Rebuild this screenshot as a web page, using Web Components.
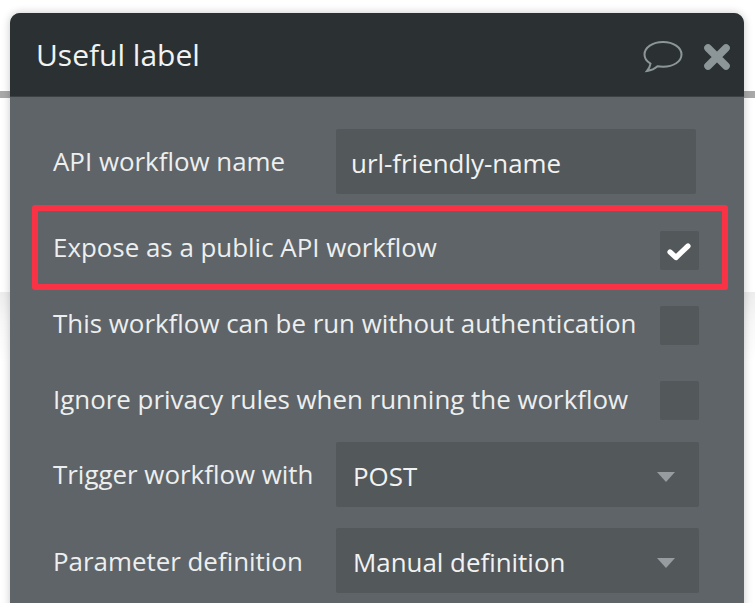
<!DOCTYPE html>
<html><head><meta charset="utf-8">
<style>
html,body{margin:0;padding:0;background:#fff;height:603px;width:755px;overflow:hidden}
</style></head><body>
<template id="t-stage"><style>
:host{display:block;position:relative;width:755px;height:603px;overflow:hidden;background:#fff;font-family:"Open Sans",sans-serif}
.line{position:absolute;left:0;right:0;top:91px;height:7px;background:#a9a9a9}
.band{position:absolute;left:0;right:0;top:292px;height:311px;background:linear-gradient(#ededed,#f8f8f8 30px,#fff 70px)}
.wrap{position:relative;padding:13px 11px 0 10px}
</style><div class="line"></div><div class="band"></div><div class="wrap"><slot></slot></div></template>

<template id="t-panel"><style>
:host{display:block;height:640px;border-radius:10px 10px 0 0;background:#5f6468;box-shadow:0 0 8px rgba(0,0,0,.22);overflow:hidden;position:relative}
header{height:83px;background:#2b3133;border-bottom:1px solid #3c4244;display:flex;align-items:center;padding:0 13px 0 26px;color:#f1f3f3;font-size:30px;gap:14px}
.t{flex:1;margin-top:0}
.b{padding:32px 48px 0 43px;display:flex;flex-direction:column}
</style><header><span class="t"><slot name="title"></slot></span><slot name="icons"></slot></header><div class="b"><slot></slot></div></template>

<template id="t-row"><style>
:host{display:flex;align-items:center;color:#edefef;font-size:25.9px;white-space:nowrap;justify-content:space-between}
.l{flex:none;display:block;margin-top:var(--nudge,-4px)}
</style><span class="l"><slot name="label"></slot></span><slot></slot></template>

<template id="t-input"><style>
:host{display:flex;align-items:center;box-sizing:border-box;width:360px;height:65px;background:#53585b;border-radius:2px;padding:2px 0 0 15px;color:#f1f3f3;font-size:25.9px}
</style><slot></slot></template>

<template id="t-select"><style>
:host{display:flex;align-items:center;justify-content:space-between;box-sizing:border-box;width:363px;height:65px;background:#53585b;border-radius:2px;padding:2px 24px 0 17px;color:#f1f3f3;font-size:25.9px;margin-right:-3px}
i{display:block;width:0;height:0;margin-top:3px;border-left:9px solid transparent;border-right:9px solid transparent;border-top:10px solid #969c9f}
</style><slot></slot><i></i></template>

<template id="t-check"><style>
:host{display:flex;align-items:center;justify-content:center;width:39px;height:39px;background:#53585b;border-radius:2px;margin-right:-3px}
svg{display:none;margin-left:-1px}
:host([checked]) svg{display:block}
</style><svg width="24" height="20" viewBox="0 0 24 20"><path d="M3 11 9 16.500 21 5" fill="none" stroke="#fff" stroke-width="5.200" stroke-linejoin="round" stroke-linecap="round"/></svg></template>

<template id="t-mark"><style>
:host{display:block;position:absolute;left:22px;top:192px;width:696px;height:85px;box-sizing:border-box;border:6px solid #f93345;border-radius:3px}
</style></template>

<script>
for (const [n,id] of [['x-stage','t-stage'],['x-panel','t-panel'],['x-row','t-row'],['x-input','t-input'],['x-select','t-select'],['x-check','t-check'],['x-mark','t-mark']]) {
  customElements.define(n, class extends HTMLElement {
    constructor(){super();this.attachShadow({mode:'open'}).appendChild(document.getElementById(id).content.cloneNode(true));}
  });
}
</script>

<x-stage><x-panel>
<span slot="title">Useful label</span>
<span slot="icons" style="display:flex;align-items:center;gap:20px;margin-top:5px">
<svg width="40" height="34" viewBox="0 0 40 34" style="display:block"><path d="M20 2C9.500 2 1.500 7.500 1.500 14.500c0 3.800 2.300 7 6 9.200-.4 2.900-1.800 5.200-3.500 7.300 4.200-.6 8-2.400 10.500-4.700 1.800.3 3.600.4 5.500.4 10.500 0 18.500-5.200 18.500-12.200S30.500 2 20 2Z" fill="none" stroke="#8c9698" stroke-width="2"/></svg>
<svg width="28" height="28" viewBox="0 0 28 28" style="display:block"><path d="M5 5 23 23M23 5 5 23" fill="none" stroke="#8c9698" stroke-width="7.600" stroke-linecap="round"/></svg>
</span>
<x-row style="height:65px;--nudge:-2px"><span slot="label">API workflow name</span><x-input>url-friendly-name</x-input></x-row>
<x-row style="height:39px;margin-top:37px;--nudge:-8px"><span slot="label">Expose as a public API workflow</span><x-check checked></x-check></x-row>
<x-row style="height:39px;margin-top:36px;--nudge:-6px"><span slot="label">This workflow can be run without authentication</span><x-check></x-check></x-row>
<x-row style="height:39px;margin-top:36px;--nudge:-4px"><span slot="label">Ignore privacy rules when running the workflow</span><x-check></x-check></x-row>
<x-row style="height:65px;margin-top:22px;--nudge:-2px"><span slot="label">Trigger workflow with</span><x-select>POST</x-select></x-row>
<x-row style="height:65px;margin-top:21px;--nudge:0px"><span slot="label">Parameter definition</span><x-select>Manual definition</x-select></x-row>
<x-mark></x-mark>
</x-panel></x-stage>
</body></html>
